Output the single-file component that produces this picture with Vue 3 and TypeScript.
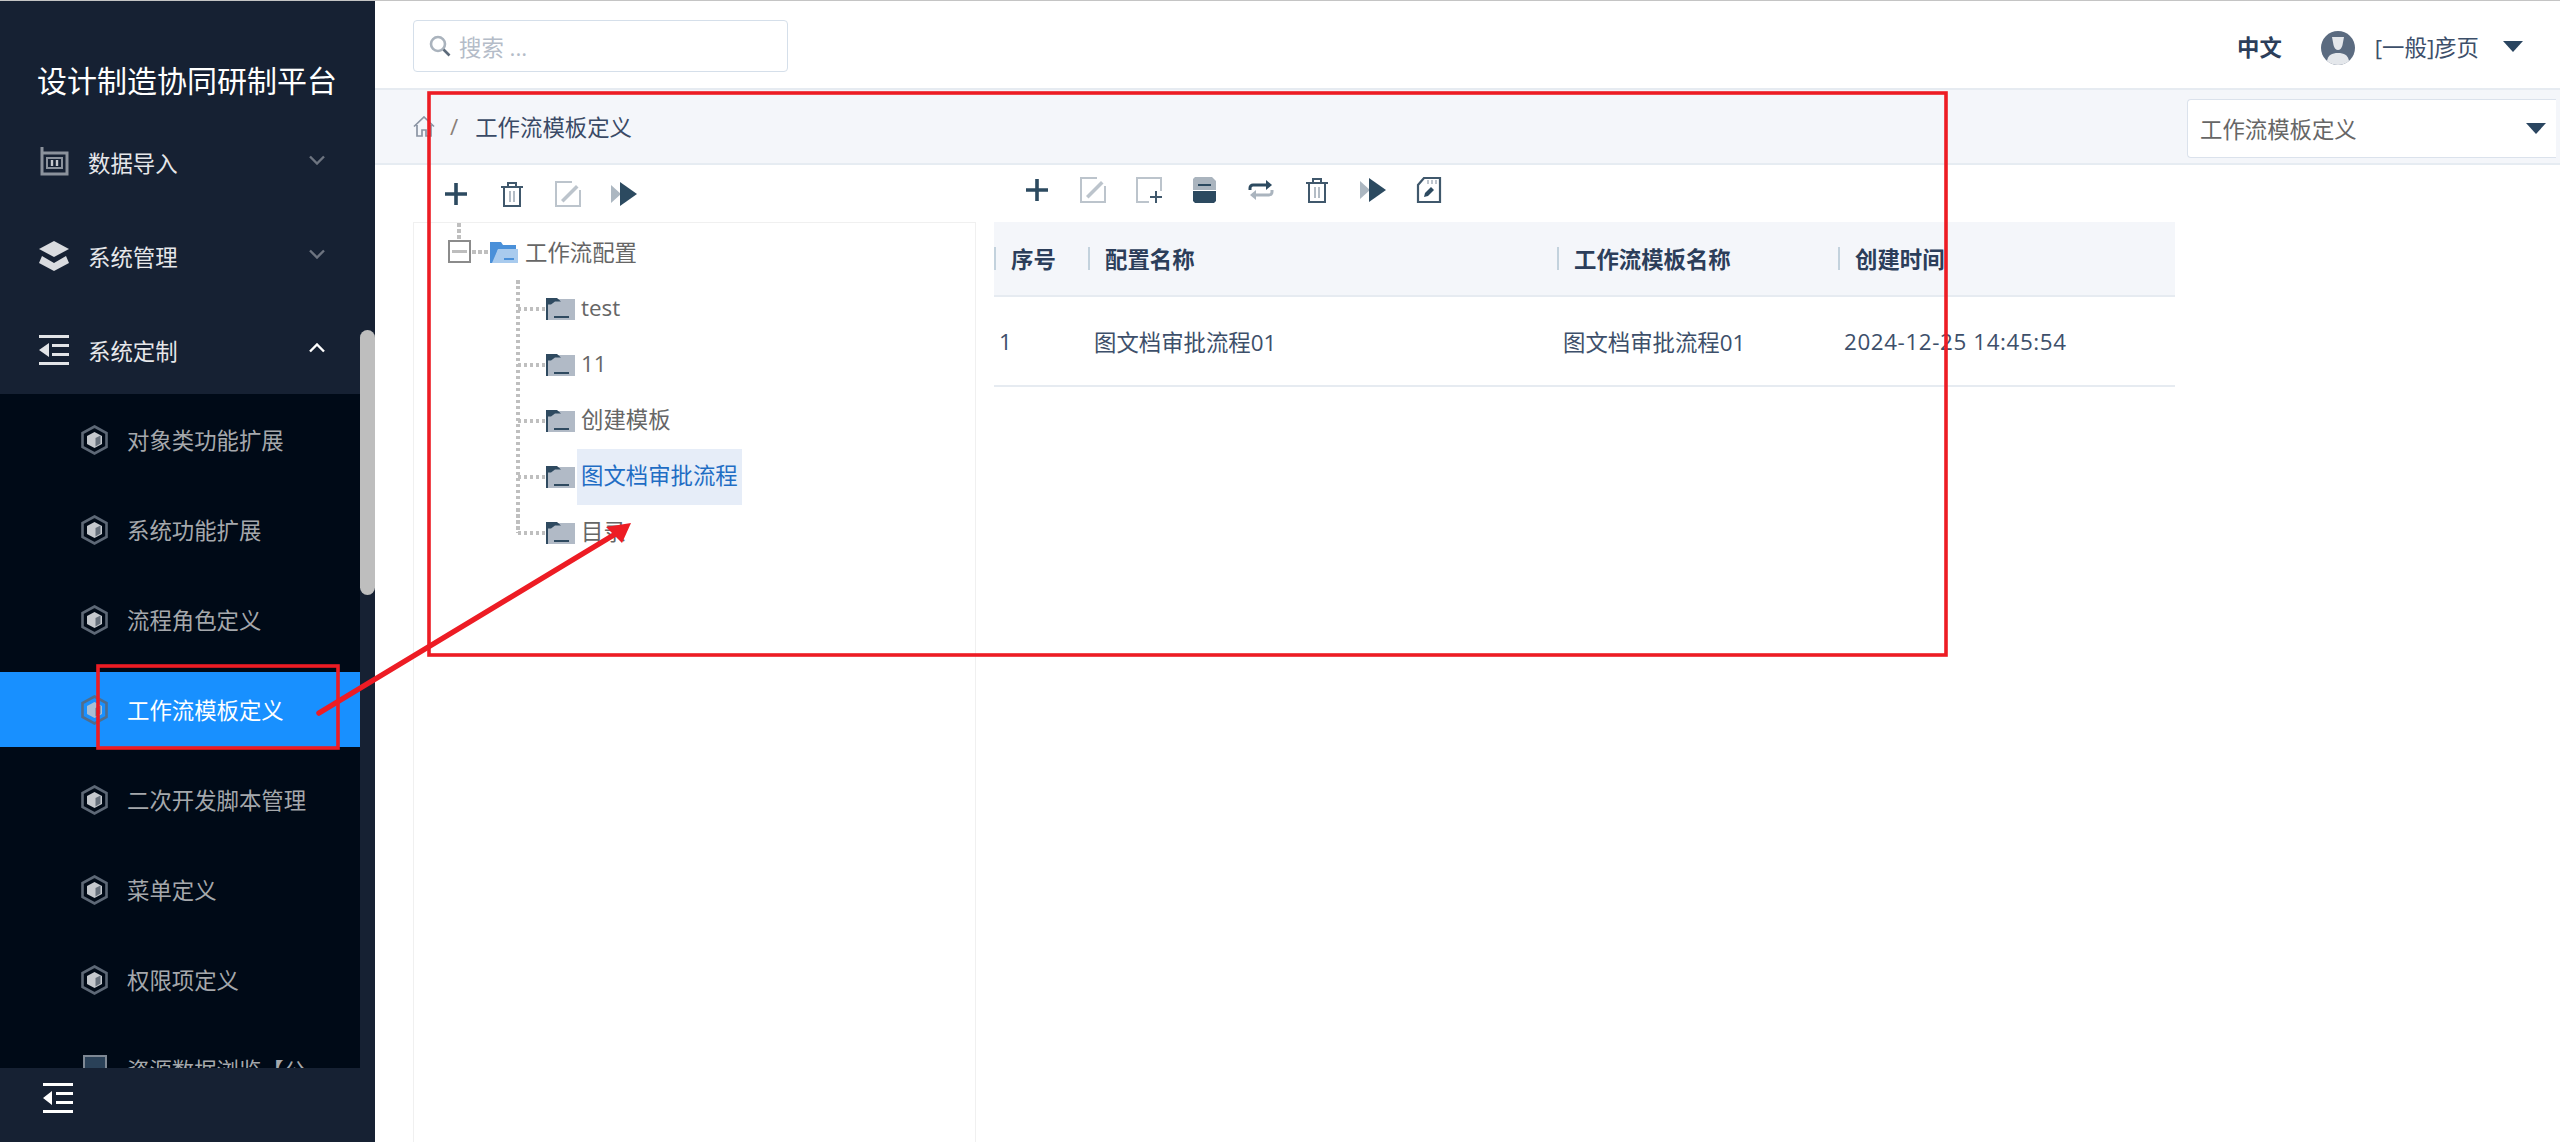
<script setup lang="ts">
const topMenus = [
  { label: '数据导入', icon: 'box', open: false },
  { label: '系统管理', icon: 'layers', open: false },
  { label: '系统定制', icon: 'indent', open: true },
]
const subMenus = ['对象类功能扩展', '系统功能扩展', '流程角色定义', '工作流模板定义', '二次开发脚本管理', '菜单定义', '权限项定义', '资源数据浏览【公']
const activeSub = '工作流模板定义'
const treeItems = ['test', '11', '创建模板', '图文档审批流程', '目录']
const selectedTree = '图文档审批流程'
const columns = [
  { key: 'idx', label: '序号', cell: '1' },
  { key: 'name', label: '配置名称', cell: '图文档审批流程01' },
  { key: 'tpl', label: '工作流模板名称', cell: '图文档审批流程01' },
  { key: 'time', label: '创建时间', cell: '2024-12-25 14:45:54' },
]
</script>

<template>
  <div class="page">
    <aside class="sidebar">
      <h1 class="brand">设计制造协同研制平台</h1>
      <div class="menu-wrap">
        <div class="top-menus">
          <div v-for="m in topMenus" :key="m.label" class="top-item">
            <svg class="top-icon" viewBox="0 0 30 30">
              <g v-if="m.icon === 'box'" fill="none" stroke="#8b929c">
                <path d="M3 0v27h25V6H3" stroke-width="3" />
                <path d="M8 11h15v10H8z" stroke-width="2" />
                <path d="M13 13v6M18 13v6" stroke-width="2.400" stroke="#c6c9ce" />
              </g>
              <g v-else-if="m.icon === 'layers'" fill="#d9dbdf">
                <path d="M15 0l15 8-15 8-15-8z" />
                <path d="M3 15l12 7 12-7 3 7-15 8-15-8z" />
              </g>
              <g v-else fill="#e2e4e7">
                <path d="M0 0h30v3H0zM0 27h30v3H0zM13 9h17v3H13zM13 18h17v3H13zM10 8v14L0 15z" />
              </g>
            </svg>
            <span class="top-label">{{ m.label }}</span>
            <svg class="chev" :class="{ open: m.open }" viewBox="0 0 16 10">
              <path d="M1 1.500l7 7 7-7" fill="none" stroke-width="2.400" />
            </svg>
          </div>
        </div>
        <div class="sub-menus">
          <div v-for="(s, i) in subMenus" :key="s" class="sub-item" :class="{ active: s === activeSub }">
            <svg v-if="i < 7" class="hex" viewBox="0 0 27 30">
              <path d="M13.500 1.500L25.500 8v14l-12 6.500L1.500 22V8z" fill="none" stroke="#5d6876" stroke-width="2.600" />
              <path d="M13.500 7l7.500 4v8l-7.500 4L6 19v-8z" fill="#c4c8cd" />
              <path d="M14.500 13l5-2.500v8l-5 3z" fill="#66707c" />
            </svg>
            <span v-else class="sq-icon"></span>
            <span>{{ s }}</span>
          </div>
        </div>
        <div class="scroll-thumb"></div>
      </div>
      <div class="side-foot">
        <svg class="foot-icon" viewBox="0 0 30 30" fill="#fff">
          <path d="M0 0h30v3H0zM0 27h30v3H0zM13 9h17v3H13zM13 18h17v3H13zM9 8v14L0 15z" />
        </svg>
      </div>
    </aside>

    <main class="main">
      <header class="topbar">
        <div class="search">
          <svg class="search-icon" viewBox="0 0 22 22">
            <circle cx="9" cy="9" r="7" fill="none" stroke="#aab3bd" stroke-width="2.600" />
            <path d="M14.500 14.500l6 6" stroke="#5c6a7a" stroke-width="2.600" />
          </svg>
          <span class="placeholder">搜索 ...</span>
        </div>
        <div class="top-right">
          <span class="lang">中文</span>
          <svg class="avatar" viewBox="0 0 34 34">
            <circle cx="17" cy="17" r="17" fill="#5b6b80" />
            <path d="M11 6h12l-1.500 8c-.6 3-2.500 5-4.500 5s-3.900-2-4.500-5z" fill="#e4e7eb" />
            <path d="M6 30c1-6 5-8 11-8s10 2 11 8c-3 2.500-7 4-11 4s-8-1.500-11-4z" fill="#e4e7eb" />
          </svg>
          <span class="user">[一般]彦页</span>
          <span class="caret"></span>
        </div>
      </header>

      <div class="crumbbar">
        <svg class="home" viewBox="0 0 22 21">
          <path d="M1 10.500L11 1l10 9.500M4 9v11h5v-6h4v6h5V9" fill="none" stroke="#8a94a3" stroke-width="1.700" />
        </svg>
        <span class="slash">/</span>
        <span class="crumb">工作流模板定义</span>
        <div class="select">
          <span>工作流模板定义</span>
          <span class="caret"></span>
        </div>
      </div>

      <div class="content">
        <section class="left-pane">
          <div class="toolbar left-tools">
            <svg class="ti" viewBox="0 0 26 26"><path d="M13 2v22M2 13h22" stroke="#2c4a60" stroke-width="3.600" /></svg>
            <svg class="ti" viewBox="0 0 26 26">
              <path d="M5 7v18h16V7M2 6h22M9 5V2h8v3" fill="none" stroke="#40586c" stroke-width="2" />
              <path d="M11 10v11M15 10v11" stroke="#b3bcc5" stroke-width="2" />
            </svg>
            <svg class="ti" viewBox="0 0 26 26">
              <path d="M25 9v16H1V1h16" fill="none" stroke="#bcc4cc" stroke-width="2" />
              <path d="M6 19L21 4l2.500 2.500L8.500 21.500z" fill="#bcc4cc" />
            </svg>
            <svg class="ti" viewBox="0 0 26 26">
              <path d="M0 4l10 9-10 9z" fill="#acb7c1" />
              <path d="M9 1l17 12L9 25z" fill="#2c4a60" />
            </svg>
          </div>
          <div class="tree">
            <div class="tree-root">
              <i class="dot-v root-stem"></i>
              <span class="minus"></span>
              <i class="dot-h root-link"></i>
              <svg class="folder-open" viewBox="0 0 28 22">
                <path d="M0 22V1h11l2 3h13v5H8L3 22z" fill="#4a90d9" />
                <path d="M2 22l6-14h20v14z" fill="#a9cbee" />
                <path d="M14 17h10v2H14z" fill="#4a90d9" />
              </svg>
              <span class="node-text">工作流配置</span>
            </div>
            <div class="tree-children">
              <i class="dot-v child-stem"></i>
              <div v-for="t in treeItems" :key="t" class="tree-row">
                <i class="dot-h child-link"></i>
                <svg class="folder" viewBox="0 0 30 22">
                  <path d="M1 1h28v21H1z" fill="#b1bac6" />
                  <path d="M0 0h11l4 3.500H9l-4 3H2V22H0z" fill="#2f4a60" />
                  <path d="M8 18h15v2H8z" fill="#2f4a60" />
                </svg>
                <span class="node-text" :class="{ selected: t === selectedTree }">{{ t }}</span>
              </div>
            </div>
          </div>
        </section>

        <section class="right-pane">
          <div class="toolbar right-tools">
            <svg class="ti" viewBox="0 0 26 26"><path d="M13 2v22M2 13h22" stroke="#2c4a60" stroke-width="3.600" /></svg>
            <svg class="ti" viewBox="0 0 26 26">
              <path d="M25 9v16H1V1h16" fill="none" stroke="#bcc4cc" stroke-width="2" />
              <path d="M6 19L21 4l2.500 2.500L8.500 21.500z" fill="#bcc4cc" />
            </svg>
            <svg class="ti" viewBox="0 0 26 26">
              <path d="M13 25H1V1h24v13" fill="none" stroke="#bcc4cc" stroke-width="2" />
              <path d="M20 14v12M14 20h12" stroke="#40586c" stroke-width="2" />
            </svg>
            <svg class="ti" viewBox="0 0 26 26">
              <path d="M3 0h17l4 4v9H1V2z" fill="#aab4be" />
              <path d="M1 14h23v10l-2 2H3l-2-2z" fill="#2c4a60" />
              <path d="M6 7h13v2H6z" fill="#2c4a60" />
            </svg>
            <svg class="ti" viewBox="0 0 26 26">
              <path d="M2 13v-2a3 3 0 0 1 3-3h16" fill="none" stroke="#2c4a60" stroke-width="3" />
              <path d="M18 3l6 5-6 5z" fill="#2c4a60" />
              <path d="M24 13v2a3 3 0 0 1-3 3H6" fill="none" stroke="#aab4be" stroke-width="3" />
              <path d="M8 13l-6 5 6 5z" fill="#aab4be" />
            </svg>
            <svg class="ti" viewBox="0 0 26 26">
              <path d="M5 7v18h16V7M2 6h22M9 5V2h8v3" fill="none" stroke="#40586c" stroke-width="2" />
              <path d="M11 10v11M15 10v11" stroke="#b3bcc5" stroke-width="2" />
            </svg>
            <svg class="ti" viewBox="0 0 26 26">
              <path d="M0 4l10 9-10 9z" fill="#acb7c1" />
              <path d="M9 1l17 12L9 25z" fill="#2c4a60" />
            </svg>
            <svg class="ti" viewBox="0 0 26 26">
              <path d="M8 1h16v24H2V8z" fill="none" stroke="#40586c" stroke-width="2.200" />
              <path d="M12 3v4M16 3v4M20 3v4" stroke="#aab4be" stroke-width="1.500" />
              <path d="M8 20l1-4 6-6 3 3-6 6z" fill="#2c4a60" />
            </svg>
          </div>
          <div class="table">
            <div class="thead">
              <div v-for="c in columns" :key="c.key" class="th" :class="`col-${c.key}`">
                <i class="sep"></i><span>{{ c.label }}</span>
              </div>
            </div>
            <div class="tbody">
              <div v-for="c in columns" :key="c.key" class="td" :class="`col-${c.key}`">{{ c.cell }}</div>
            </div>
          </div>
        </section>
      </div>
    </main>

    <!-- annotation layer drawn over the screenshot -->
    <svg class="annot" viewBox="0 0 2560 1142">
      <rect x="429" y="93" width="1517" height="562" fill="none" stroke="#ed1c24" stroke-width="3.600" />
      <rect x="98" y="666" width="240" height="82" fill="none" stroke="#ed1c24" stroke-width="3.600" />
      <path d="M319 713L622 530" stroke="#ed1c24" stroke-width="5.500" stroke-linecap="round" />
      <path d="M631 523L606 527L622 543z" fill="#ed1c24" />
    </svg>
  </div>
</template>

<style>
html, body { margin: 0; padding: 0; background: #fff; }
</style>

<style scoped>
.page {
  position: relative;
  display: flex;
  width: 2560px;
  height: 1142px;
  overflow: hidden;
  box-sizing: border-box;
  border-top: 1px solid #c4c4c4;
  font-family: "Open Sans", "Noto Sans CJK SC", sans-serif;
  font-size: 22.4px;
}
.sidebar {
  width: 375px;
  flex: none;
  display: flex;
  flex-direction: column;
  background: #162133;
}
.brand {
  margin: 0;
  height: 117px;
  padding: 62px 0 0 37px;
  box-sizing: border-box;
  font-size: 30px;
  line-height: 36px;
  font-weight: 400;
  color: #fff;
  white-space: nowrap;
}
.menu-wrap {
  position: relative;
  flex: 1;
  overflow: hidden;
}
.top-menus {
  display: flex;
  flex-direction: column;
  gap: 6px;
}
.top-item {
  height: 88px;
  display: flex;
  align-items: center;
  padding-left: 39px;
  color: #e6e7ea;
}
.top-icon { width: 30px; height: 30px; flex: none; }
.top-label { margin-left: 19px; flex: 1; }
.chev {
  width: 16px;
  height: 10px;
  margin-right: 50px;
  stroke: #6d7480;
  margin-top: -4px;
}
.chev.open { transform: rotate(180deg); stroke: #fff; }
.sub-menus {
  width: 360px;
  box-sizing: border-box;
  padding-top: 8px;
  display: flex;
  flex-direction: column;
  gap: 15px;
  background: #000a17;
  height: 800px;
}
.sub-item {
  height: 75px;
  flex: none;
  display: flex;
  align-items: center;
  padding-left: 81px;
  gap: 19px;
  color: #a5a8ac;
  white-space: nowrap;
}
.sub-item.active {
  background: #1890ff;
  color: #fff;
}
.hex { width: 27px; height: 30px; flex: none; }
.sub-item.active .hex { opacity: 0.85; }
.sq-icon {
  width: 24px;
  height: 30px;
  box-sizing: border-box;
  margin: 0 1px 0 2px;
  flex: none;
  border: 2px solid #7e8894;
  background: #2a4158;
}
.scroll-thumb {
  position: absolute;
  top: 212px;
  right: 0;
  width: 15px;
  height: 265px;
  border-radius: 8px;
  background: #bebebe;
}
.side-foot {
  height: 74px;
  flex: none;
  padding: 15px 0 0 43px;
  box-sizing: border-box;
  background: #162133;
}
.foot-icon { width: 30px; height: 30px; display: block; }

.main {
  flex: 1;
  min-width: 0;
  display: flex;
  flex-direction: column;
}
.topbar {
  height: 89px;
  flex: none;
  box-sizing: border-box;
  border-bottom: 2px solid #e6ebf1;
  display: flex;
  align-items: flex-start;
  justify-content: space-between;
  padding: 19px 37px 0 38px;
}
.search {
  width: 375px;
  height: 52px;
  box-sizing: border-box;
  border: 1.500px solid #d5dfea;
  border-radius: 4px;
  display: flex;
  align-items: center;
  padding-left: 15px;
  gap: 8px;
}
.search-icon { width: 22px; height: 22px; flex: none; }
.placeholder { color: #b4bcc8; }
.top-right {
  display: flex;
  align-items: center;
  height: 52px;
}
.lang { font-weight: 700; color: #2c3e5a; margin-right: 39px; }
.avatar { width: 34px; height: 34px; margin: 4px 20px 0 0; flex: none; }
.user { color: #3d4f6a; margin-right: 24px; }
.caret {
  width: 0;
  height: 0;
  border-left: 10px solid transparent;
  border-right: 10px solid transparent;
  border-top: 11px solid #2a4560;
}
.crumbbar {
  height: 75px;
  flex: none;
  box-sizing: border-box;
  display: flex;
  align-items: center;
  padding-left: 38px;
  background: #f4f6fa;
  border-bottom: 2px solid #e6ecf2;
}
.home { width: 22px; height: 21px; flex: none; }
.slash { color: #8a7f78; margin: 0 17px 0 15px; }
.crumb { color: #3a4a66; flex: 1; }
.select {
  width: 369px;
  height: 59px;
  box-sizing: border-box;
  margin: 3px 4px 0 0;
  border: 1.500px solid #dbe2ec;
  border-right: 0;
  border-radius: 4px 0 0 4px;
  background: #fff;
  display: flex;
  align-items: center;
  justify-content: space-between;
  padding: 0 10px 0 12px;
  color: #666;
}
.content {
  flex: 1;
  display: flex;
  min-height: 0;
}
.left-pane {
  margin-left: 38px;
  width: 563px;
  flex: none;
  display: flex;
  flex-direction: column;
}
.toolbar {
  height: 57px;
  flex: none;
  display: flex;
  align-items: center;
}
.ti { width: 26px; height: 26px; flex: none; }
.left-tools { padding-left: 30px; gap: 30px; }
.tree {
  flex: 1;
  box-sizing: border-box;
  border: 1px solid #f0f0f0;
  border-bottom: 0;
  color: #666;
}
.tree-root {
  position: relative;
  height: 57px;
  display: flex;
  align-items: center;
  padding-left: 34px;
}
.dot-v {
  position: absolute;
  width: 4px;
  background: repeating-linear-gradient(to bottom, #bfbfbf 0 3.500px, transparent 3.500px 6px);
}
.dot-h {
  display: block;
  flex: none;
  height: 4px;
  background: repeating-linear-gradient(to right, #bfbfbf 0 3.500px, transparent 3.500px 6px);
}
.root-stem { left: 43px; top: 0; height: 18px; }
.minus {
  position: relative;
  width: 23px;
  height: 23px;
  flex: none;
  box-sizing: border-box;
  border: 2px solid #8b8b8b;
  background: linear-gradient(#bdbdbd, #bdbdbd) center / 15px 3px no-repeat;
}
.root-link { width: 17px; margin: 0 1px; }
.folder-open { width: 28px; height: 22px; flex: none; margin-right: 7px; }
.node-text { white-space: nowrap; }
.tree-children {
  position: relative;
  display: flex;
  flex-direction: column;
  padding-top: 1px;
}
.child-stem { left: 102px; top: 0; height: 253px; }
.tree-row {
  height: 56px;
  display: flex;
  align-items: center;
  padding-left: 104px;
}
.child-link { width: 27px; margin-right: 1px; }
.folder { width: 30px; height: 22px; flex: none; margin-right: 1px; }
.tree-row .node-text {
  height: 56px;
  line-height: 54px;
  padding: 0 4px;
}
.node-text.selected {
  background: #e6edf8;
  color: #1f6dc4;
}
.right-pane {
  margin-left: 18px;
  width: 1181px;
  flex: none;
  display: flex;
  flex-direction: column;
}
.right-tools {
  height: 57px;
  padding: 0 0 8px 30px;
  box-sizing: border-box;
  gap: 30px;
}
.table { color: #3d4f6a; }
.thead, .tbody {
  display: grid;
  grid-template-columns: 94px 469px 281px 337px;
}
.thead {
  height: 75px;
  box-sizing: border-box;
  background: #f4f6fa;
  border-bottom: 2px solid #e6ebf1;
  font-weight: 700;
  color: #2c3e5a;
  align-items: center;
}
.th {
  display: flex;
  align-items: center;
  gap: 15px;
}
.sep {
  width: 2px;
  height: 23px;
  background: #c3d2dd;
  flex: none;
}
.tbody {
  height: 90px;
  box-sizing: border-box;
  border-bottom: 2px solid #e6ebf1;
  align-items: center;
}
.td { padding-left: 6px; white-space: nowrap; }
.td.col-idx { padding-left: 5px; }
.td.col-time { letter-spacing: 0.6px; }
.annot {
  position: absolute;
  left: 0;
  top: -1px;
  width: 2560px;
  height: 1142px;
  pointer-events: none;
}
</style>
